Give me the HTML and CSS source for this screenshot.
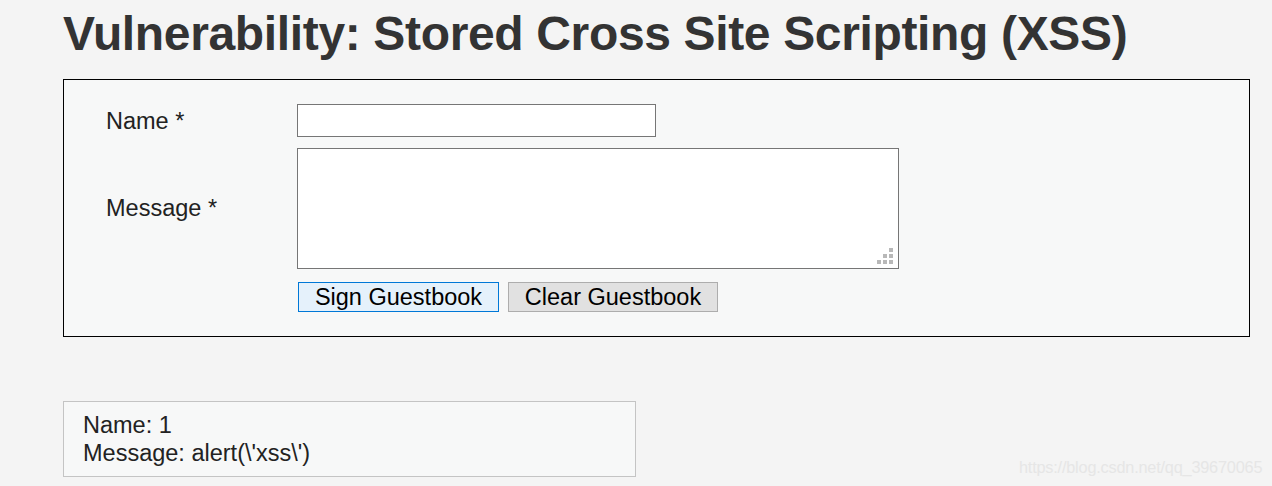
FILE: index.html
```html
<!DOCTYPE html>
<html>
<head>
<meta charset="utf-8">
<link rel="stylesheet" href="styles.css">
</head>
<body>
<div class="page">
  <h1 class="title">Vulnerability: Stored Cross Site Scripting (XSS)</h1>
  <div class="vulnerable">
    <form class="guest-form">
      <label class="lbl lbl-name">Name *</label>
      <div class="field"><input class="name-input" type="text"></div>
      <label class="lbl">Message *</label>
      <div class="field area-wrap">
        <textarea class="msg-input"></textarea>
        <svg class="grip" width="16" height="16" viewBox="0 0 16 16">
          <rect x="12" y="0" width="4" height="4" fill="#b8b8b8"/>
          <rect x="6" y="6" width="4" height="4" fill="#b8b8b8"/>
          <rect x="12" y="6" width="4" height="4" fill="#b8b8b8"/>
          <rect x="0" y="12" width="4" height="4" fill="#b8b8b8"/>
          <rect x="6" y="12" width="4" height="4" fill="#b8b8b8"/>
          <rect x="12" y="12" width="4" height="4" fill="#b8b8b8"/>
        </svg>
      </div>
      <div></div>
      <div class="buttons">
        <button type="button" class="btn btn-primary">Sign Guestbook</button>
        <button type="button" class="btn btn-secondary">Clear Guestbook</button>
      </div>
    </form>
  </div>
  <div class="entry">
    <div>Name: 1</div>
    <div>Message: alert(\'xss\')</div>
  </div>
</div>
<div class="watermark">https://blog.csdn.net/qq_39670065</div>
</body>
</html>
```
FILE: styles.css
```css
html, body {
  margin: 0;
  padding: 0;
  background: #f4f4f4;
  font-family: "Liberation Sans", Arial, sans-serif;
  color: #222;
}
.page {
  padding-left: 63px;
  padding-right: 22px;
}
.title {
  margin: 0;
  padding-top: 5px;
  height: 74px;
  font-size: 48px;
  line-height: 58px;
  font-weight: bold;
  color: #333;
  letter-spacing: -0.35px;
}
.vulnerable {
  border: 1px solid #000;
  background: #f7f8f8;
  padding: 24px 0 24px 42px;
}
.guest-form {
  display: grid;
  grid-template-columns: 191px 1fr;
  row-gap: 11px;
  align-items: center;
}
.lbl {
  font-size: 23.5px;
  color: #222;
}
.lbl-name {
  padding-top: 2px;
}
.field {
  display: flex;
}
.area-wrap {
  position: relative;
  width: 602px;
}
.name-input {
  box-sizing: border-box;
  width: 359px;
  height: 33px;
  border: 1px solid #767676;
  background: #fff;
  margin: 0;
  padding: 0;
}
.msg-input {
  box-sizing: border-box;
  width: 602px;
  height: 121px;
  border: 1px solid #767676;
  background: #fff;
  margin: 0;
  padding: 0;
  resize: none;
}
.grip {
  position: absolute;
  right: 6px;
  bottom: 5px;
  width: 16px;
  height: 16px;
}
.buttons {
  display: flex;
  gap: 9px;
  margin-top: 2px;
  padding-left: 1px;
}
.btn {
  box-sizing: border-box;
  height: 30px;
  font-family: "Liberation Sans", Arial, sans-serif;
  font-size: 23.5px;
  line-height: 26px;
  color: #000;
  padding: 0 15px;
  margin: 0;
}
.btn-primary {
  width: 201px;
  background: #e5f1fb;
  border: 1px solid #0078d7;
}
.btn-secondary {
  width: 210px;
  background: #e1e1e1;
  border: 1px solid #adadad;
}
.entry {
  margin-top: 64px;
  width: 573px;
  box-sizing: border-box;
  border: 1px solid #c4c4c4;
  background: #f7f8f8;
  padding: 9px 19px 9px;
  font-size: 23.5px;
  line-height: 28px;
  color: #222;
}
.watermark {
  position: absolute;
  left: 1019px;
  top: 458px;
  font-size: 16.3px;
  color: #e6e6e6;
  letter-spacing: -0.2px;
}
```
